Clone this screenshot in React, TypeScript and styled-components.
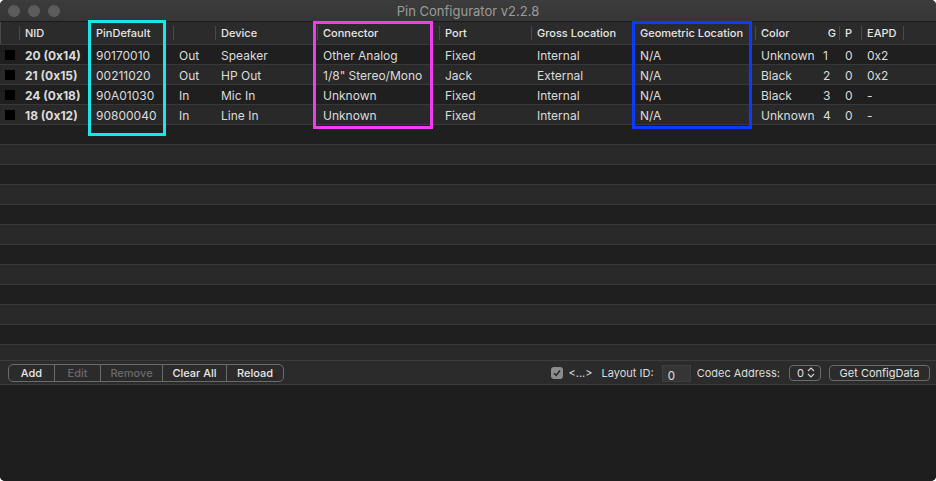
import { FunctionComponent } from 'react';
import styled, { createGlobalStyle } from 'styled-components';

const GlobalStyle = createGlobalStyle`
  html, body {
    margin: 0;
    padding: 0;
    background: #ffffff;
  }
  body {
    font-family: Inter, "Liberation Sans", sans-serif;
  }
`;

type Column = { key: string; title: string; width: number; align?: 'left' | 'right' };

const columns: Column[] = [
  { key: 'chk', title: '', width: 20 },
  { key: 'nid', title: 'NID', width: 71 },
  { key: 'pin', title: 'PinDefault', width: 83 },
  { key: 'dir', title: '', width: 42 },
  { key: 'device', title: 'Device', width: 102 },
  { key: 'connector', title: 'Connector', width: 122 },
  { key: 'port', title: 'Port', width: 92 },
  { key: 'gross', title: 'Gross Location', width: 103 },
  { key: 'geo', title: 'Geometric Location', width: 121 },
  { key: 'color', title: 'Color', width: 62 },
  { key: 'g', title: 'G', width: 22, align: 'right' },
  { key: 'p', title: 'P', width: 22 },
  { key: 'eapd', title: 'EAPD', width: 42 },
];

const template = columns.map((c) => `${c.width}px`).join(' ') + ' 1fr';

const pins = [
  ['20 (0x14)', '90170010', 'Out', 'Speaker', 'Other Analog', 'Fixed', 'Internal', 'N/A', 'Unknown', '1', '0', '0x2'],
  ['21 (0x15)', '00211020', 'Out', 'HP Out', '1/8" Stereo/Mono', 'Jack', 'External', 'N/A', 'Black', '2', '0', '0x2'],
  ['24 (0x18)', '90A01030', 'In', 'Mic In', 'Unknown', 'Fixed', 'Internal', 'N/A', 'Black', '3', '0', '-'],
  ['18 (0x12)', '90800040', 'In', 'Line In', 'Unknown', 'Fixed', 'Internal', 'N/A', 'Unknown', '4', '0', '-'],
];

const TOTAL_ROWS = 16;

export default function App() {
  return (
    <>
      <GlobalStyle />
      <Window>
        <TitleBar>
          <Lights>
            <Light />
            <Light />
            <Light />
          </Lights>
          <Title>Pin Configurator v2.2.8</Title>
        </TitleBar>

        <HeaderRow>
          {columns.map((c) => (
            <HeaderCell key={c.key} $align={c.align}>
              {c.title}
            </HeaderCell>
          ))}
          <HeaderCell />
        </HeaderRow>

        <Body>
          {Array.from({ length: TOTAL_ROWS }).map((_, i) => (
            <Row key={i} $odd={i % 2 === 1}>
              {pins[i] && (
                <>
                  <Cell>
                    <Swatch />
                  </Cell>
                  {pins[i].map((v, j) => (
                    <Cell key={j} $bold={j === 0}>
                      {v}
                    </Cell>
                  ))}
                </>
              )}
            </Row>
          ))}
        </Body>

        <Toolbar>
          <Segmented>
            <Segment $w={45}>Add</Segment>
            <Segment $w={45} $disabled>
              Edit
            </Segment>
            <Segment $w={61} $disabled>
              Remove
            </Segment>
            <Segment $w={63}>Clear All</Segment>
            <Segment $w={56}>Reload</Segment>
          </Segmented>
          <Spacer />
          <Check>
            <svg width="10" height="10" viewBox="0 0 10 10">
              <path d="M2 5.2 L4.2 7.4 L8 2.6" fill="none" stroke="#2a2a2a" strokeWidth="1.6" />
            </svg>
          </Check>
          <Label $gap={3}>&lt;...&gt;</Label>
          <Label $gap={8}>Layout ID:</Label>
          <Field>0</Field>
          <Label $gap={9}>Codec Address:</Label>
          <Popup>
            0
            <svg width="8" height="11" viewBox="0 0 8 11">
              <path d="M1 4 L4 1 L7 4 M1 7 L4 10 L7 7" fill="none" stroke="#d0d0d0" strokeWidth="1.2" />
            </svg>
          </Popup>
          <Button>Get ConfigData</Button>
        </Toolbar>

        <Bottom />

        <Highlight $color="#19e6e6" $x={88} $y={20} $w={78} $h={116} />
        <Highlight $color="#f23cf2" $x={313} $y={21} $w={120} $h={108} />
        <Highlight $color="#0a3cff" $x={632} $y={21} $w={120} $h={108} />
      </Window>
    </>
  );
}

const Window = styled.div`
  position: relative;
  width: 936px;
  height: 481px;
  display: flex;
  flex-direction: column;
  background: #1f1f1f;
  border-radius: 5px;
  overflow: hidden;
  color: #dedede;
  font-size: 12px;
`;

const TitleBar = styled.div`
  height: 22px;
  flex: none;
  display: flex;
  align-items: center;
  justify-content: center;
  position: relative;
  background: linear-gradient(#3c3c3c, #363636);
  border-bottom: 1px solid #1a1a1a;
  box-sizing: border-box;
`;

const Lights = styled.div`
  position: absolute;
  left: 8px;
  top: 5px;
  display: flex;
  gap: 8px;
`;

const Light = styled.span`
  width: 12px;
  height: 12px;
  border-radius: 50%;
  background: #5c5c5c;
`;

const Title = styled.div`
  font-size: 13px;
  color: #9c9c9c;
`;

const HeaderRow = styled.div`
  height: 23px;
  flex: none;
  display: grid;
  grid-template-columns: ${template};
  background: #2b2b2b;
  border-bottom: 1px solid #3a3a3a;
  box-shadow: inset 1px 0 0 #4a4a4a;
  box-sizing: border-box;
`;

const HeaderCell = styled.div<{ $align?: 'left' | 'right' }>`
  position: relative;
  display: flex;
  align-items: center;
  justify-content: ${(p) => (p.$align === 'right' ? 'flex-end' : 'flex-start')};
  padding: 0 4px 0 5px;
  font-weight: 500;
  font-size: 11px;
  color: #e6e6e6;
  white-space: nowrap;

  &::after {
    content: '';
    position: absolute;
    right: 0;
    top: 4px;
    bottom: 4px;
    width: 1px;
    background: #4a4a4a;
  }

  &:nth-child(10)::after,
  &:last-child::after {
    display: none;
  }
`;

const Body = styled.div`
  height: 315px;
  flex: none;
  overflow: hidden;
  box-shadow: inset 1px 0 0 #4a4a4a, inset -1px 0 0 #3a3a3a;
`;

const Row = styled.div<{ $odd: boolean }>`
  height: 20px;
  box-sizing: border-box;
  display: grid;
  grid-template-columns: ${template};
  padding-top: 1px;
  background: ${(p) => (p.$odd ? '#292929' : '#1f1f1f')};
  border-bottom: 1px solid #383838;
`;

const Cell = styled.div<{ $bold?: boolean }>`
  display: flex;
  align-items: center;
  padding: 0 4px 0 5px;
  white-space: nowrap;
  font-weight: ${(p) => (p.$bold ? 700 : 400)};
  color: #dcdcdc;
`;

const Swatch = styled.span`
  width: 10px;
  height: 10px;
  background: #000000;
`;

const Toolbar = styled.div`
  height: 25px;
  flex: none;
  display: flex;
  align-items: center;
  padding: 0 6px 0 8px;
  background: #2b2b2b;
  border-top: 1px solid #3d3d3d;
  border-bottom: 1px solid #3d3d3d;
  box-sizing: border-box;
  font-size: 11px;
`;

const Segmented = styled.div`
  display: flex;
  height: 16px;
  border: 1px solid #6b6b6b;
  border-radius: 5px;
  overflow: hidden;
`;

const Segment = styled.div<{ $w: number; $disabled?: boolean }>`
  width: ${(p) => p.$w}px;
  display: flex;
  align-items: center;
  justify-content: center;
  font-weight: 500;
  color: ${(p) => (p.$disabled ? '#6a6a6a' : '#e8e8e8')};
  border-left: 1px solid #6b6b6b;

  &:first-child {
    border-left: none;
  }
`;

const Spacer = styled.div`
  flex: 1;
`;

const Check = styled.div`
  width: 12px;
  height: 12px;
  border-radius: 3px;
  background: #8c8c8c;
  display: flex;
  align-items: center;
  justify-content: center;
`;

const Label = styled.span<{ $gap: number }>`
  margin-left: 6px;
  margin-right: ${(p) => p.$gap}px;
  color: #dcdcdc;
  white-space: nowrap;
`;

const Field = styled.div`
  width: 29px;
  height: 17px;
  margin-top: 2px;
  box-sizing: border-box;
  padding: 4px 0 0 5px;
  background: #353535;
  border: 1px solid #3e3e3e;
  color: #e0e0e0;
  font-size: 11.5px;
  line-height: 12px;
`;

const Popup = styled.div`
  width: 32px;
  height: 16px;
  margin-right: 8px;
  box-sizing: border-box;
  display: flex;
  align-items: center;
  justify-content: space-between;
  padding: 0 5px 0 7px;
  border: 1px solid #6b6b6b;
  border-radius: 4px;
  color: #e0e0e0;
`;

const Button = styled.div`
  width: 101px;
  height: 16px;
  box-sizing: border-box;
  display: flex;
  align-items: center;
  justify-content: center;
  border: 1px solid #6b6b6b;
  border-radius: 4px;
  color: #e4e4e4;
`;

const Bottom = styled.div`
  flex: 1;
  background: #1e1e1e;
`;

const Highlight = styled.div<{ $color: string; $x: number; $y: number; $w: number; $h: number }>`
  position: absolute;
  left: ${(p) => p.$x}px;
  top: ${(p) => p.$y}px;
  width: ${(p) => p.$w}px;
  height: ${(p) => p.$h}px;
  box-sizing: border-box;
  border: 3px solid ${(p) => p.$color};
  pointer-events: none;
`;
